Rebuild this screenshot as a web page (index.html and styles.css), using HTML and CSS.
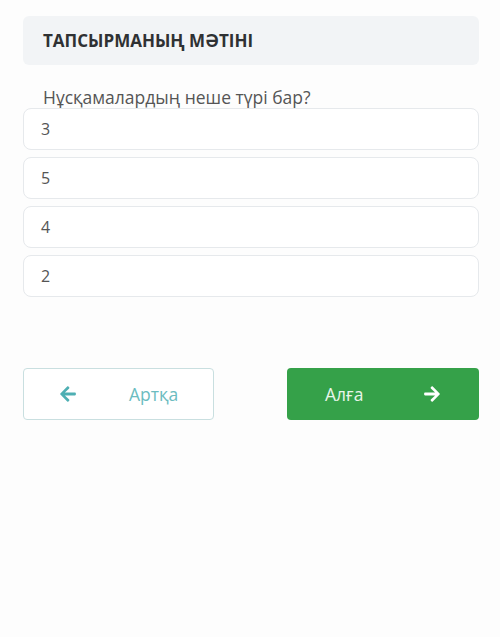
FILE: index.html
```html
<!DOCTYPE html>
<html lang="kk">
<head>
    <meta charset="UTF-8">
    <meta name="viewport" content="width=device-width, initial-scale=1.0">
    <title>Тапсырма</title>
    <link rel="stylesheet" href="styles.css">
</head>
<body>
    <div class="task">
        <div class="task-header">ТАПСЫРМАНЫҢ МӘТІНІ</div>

        <p class="question">Нұсқамалардың неше түрі бар?</p>

        <div class="options">
            <div class="option">3</div>
            <div class="option">5</div>
            <div class="option">4</div>
            <div class="option">2</div>
        </div>

        <div class="nav-buttons">
            <button class="btn btn-back">
                <svg class="arrow" viewBox="0 0 448 512"><path d="M257.5 445.1l-22.2 22.2c-9.4 9.4-24.6 9.4-33.9 0L7 273c-9.4-9.4-9.4-24.6 0-33.9L201.4 44.7c9.4-9.4 24.6-9.4 33.9 0l22.2 22.2c9.5 9.5 9.3 25-.4 34.3L136.6 216H424c13.3 0 24 10.7 24 24v32c0 13.3-10.7 24-24 24H136.6l120.5 114.8c9.8 9.3 10 24.8.4 34.3z"/></svg>
                <span>Артқа</span>
            </button>
            <button class="btn btn-next">
                <span>Алға</span>
                <svg class="arrow" viewBox="0 0 448 512"><path d="M190.5 66.9l22.2-22.2c9.4-9.4 24.6-9.4 33.9 0L441 239c9.4 9.4 9.4 24.6 0 33.9L246.6 467.3c-9.4 9.4-24.6 9.4-33.9 0l-22.2-22.2c-9.5-9.5-9.3-25 .4-34.3L311.4 296H24c-13.3 0-24-10.7-24-24v-32c0-13.3 10.7-24 24-24h287.4L190.9 101.2c-9.8-9.3-10-24.8-.4-34.3z"/></svg>
            </button>
        </div>
    </div>
</body>
</html>
```

FILE: styles.css
```css
body {
    margin: 0;
    background-color: #fdfdfd;
    font-family: "Open Sans", "Noto Sans", Arial, sans-serif;
    color: #444;
}

.task {
    padding: 16px 21px 0 23px;
}

.task-header {
    height: 49px;
    display: flex;
    align-items: center;
    padding-left: 20px;
    background-color: #f2f4f6;
    border-radius: 6px;
    font-size: 17px;
    font-weight: 700;
    color: #2f3133;
}

.question {
    margin: 21px 0 0 20px;
    font-size: 17.5px;
    line-height: 22px;
    color: #555;
}

.options {
    display: flex;
    flex-direction: column;
    gap: 7px;
}

.option {
    height: 40px;
    display: flex;
    align-items: center;
    padding-left: 17px;
    background-color: #fff;
    border: 1px solid #e6e9ec;
    border-radius: 8px;
    font-size: 16px;
    color: #555;
}

.nav-buttons {
    margin-top: 71px;
    display: flex;
    justify-content: space-between;
}

.btn {
    height: 52px;
    display: flex;
    align-items: center;
    border-radius: 4px;
    font-family: inherit;
    font-size: 17.5px;
    cursor: pointer;
}

.btn .arrow {
    width: 18px;
    height: 18px;
}

.btn-back {
    width: 191px;
    padding: 0 0 0 35px;
    background-color: #fff;
    border: 1px solid #c9dfe0;
    color: #6bbcc0;
}

.btn-back .arrow {
    fill: #4eafb3;
}

.btn-back span {
    margin-left: 52px;
}

.btn-next {
    width: 192px;
    padding: 0 38px 0 38px;
    justify-content: space-between;
    background-color: #35a149;
    border: none;
    color: #e8f5ea;
}

.btn-next .arrow {
    fill: #fff;
}
```
